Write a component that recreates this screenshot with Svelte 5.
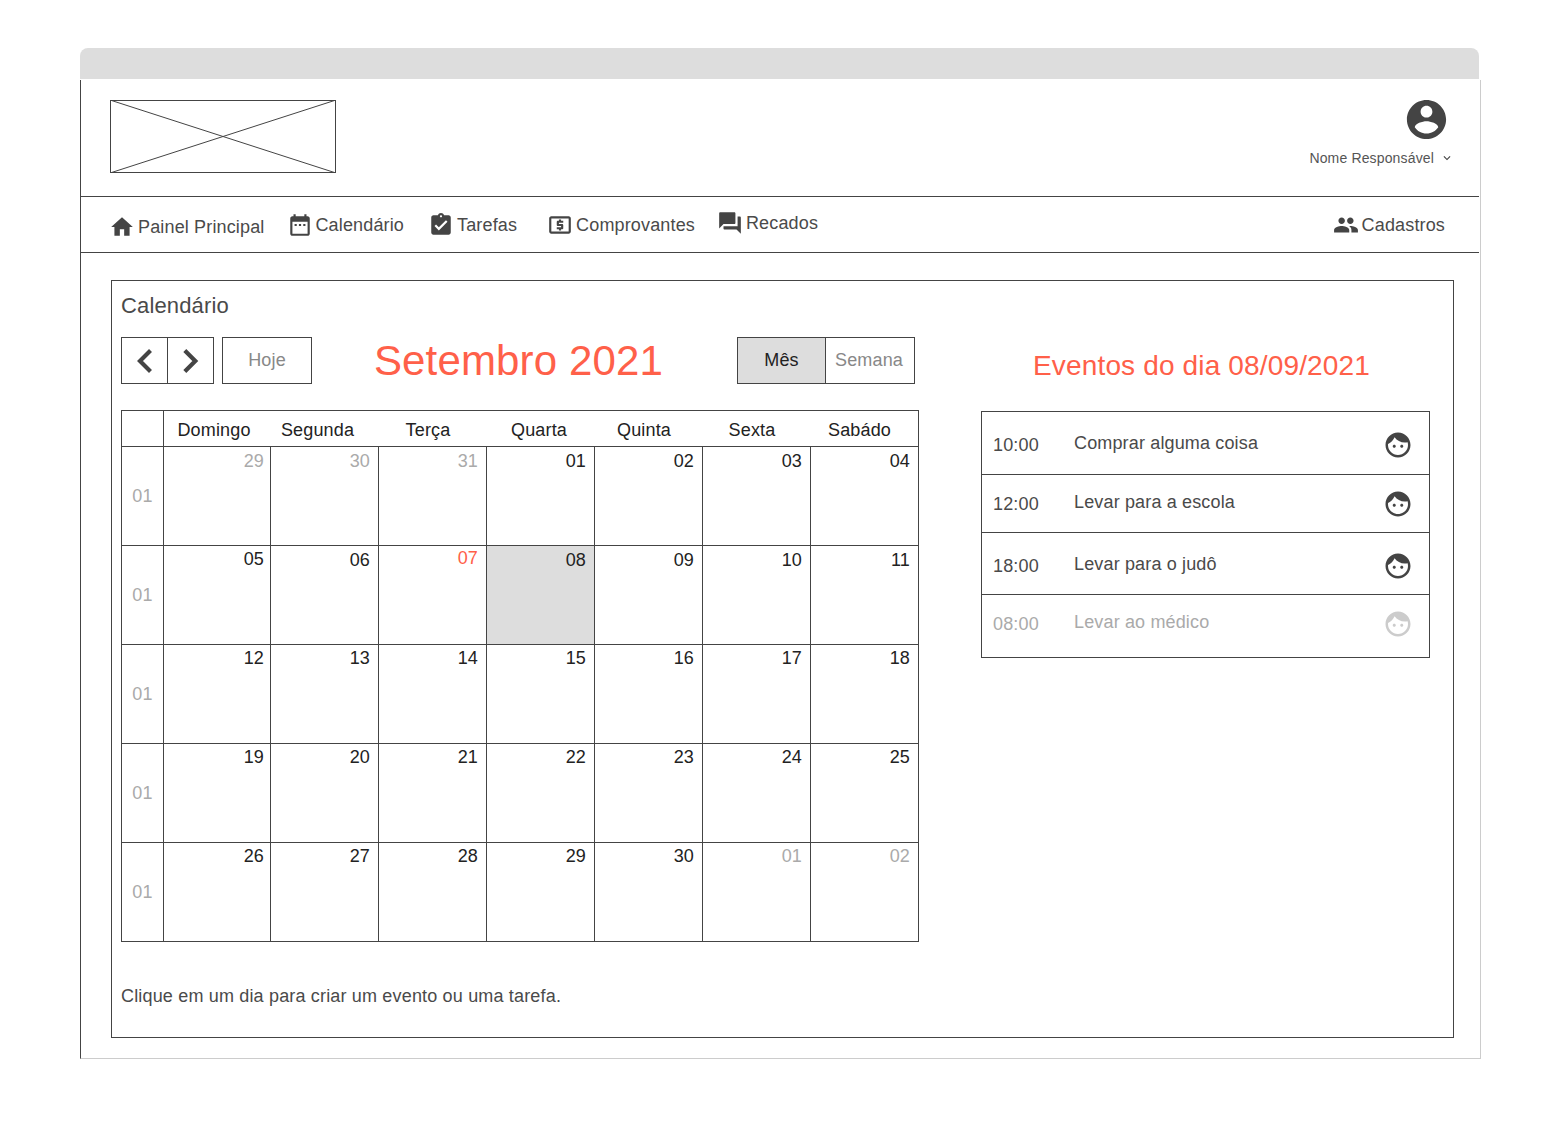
<script>
	const weekdays = ["Domingo", "Segunda", "Terça", "Quarta", "Quinta", "Sexta", "Sabádo"];
	const weeks = [
		["29", "30", "31", "01", "02", "03", "04"],
		["05", "06", "07", "08", "09", "10", "11"],
		["12", "13", "14", "15", "16", "17", "18"],
		["19", "20", "21", "22", "23", "24", "25"],
		["26", "27", "28", "29", "30", "01", "02"]
	];
	const events = [
		{ time: "10:00", title: "Comprar alguma coisa", height: 63, top: 18 },
		{ time: "12:00", title: "Levar para a escola", height: 58, top: 14 },
		{ time: "18:00", title: "Levar para o judô", height: 62, top: 18 },
		{ time: "08:00", title: "Levar ao médico", height: 62, top: 14, done: true }
	];

	function dayClass(w, d) {
		if ((w === 0 && d < 3) || (w === 4 && d > 4)) return "day muted";
		if (w === 1 && d === 0) return "day raised";
		if (w === 1 && d === 2) return "day red";
		if (w === 1 && d === 3) return "day selected";
		return "day";
	}
</script>

<div class="page">
	<div class="topbar"></div>
	<div class="frame">
		<header class="header">
			<div class="logo">
				<svg width="226" height="73" viewBox="0 0 226 73">
					<rect x="0.5" y="0.5" width="225" height="72" fill="none" stroke="#444" />
					<path d="M0 0L226 73M226 0L0 73" stroke="#444" fill="none" />
				</svg>
			</div>
			<div class="user">
				<svg class="avatar" width="47" height="47" viewBox="0 0 24 24"><path d="M12 2C6.48 2 2 6.48 2 12s4.48 10 10 10 10-4.48 10-10S17.52 2 12 2zm0 3c1.66 0 3 1.34 3 3s-1.34 3-3 3-3-1.34-3-3 1.34-3 3-3zm0 14.2c-2.5 0-4.71-1.28-6-3.22.03-1.99 4-3.08 6-3.08 1.99 0 5.97 1.09 6 3.08-1.29 1.94-3.5 3.22-6 3.22z" /></svg>
				<div class="user__name">
					<span>Nome Responsável</span>
					<svg width="14" height="14" viewBox="0 0 24 24"><path d="M7.41 8.59L12 13.17l4.59-4.58L18 10l-6 6-6-6 1.41-1.41z" /></svg>
				</div>
			</div>
		</header>

		<nav class="nav">
			<a class="nav__item nav__home">
				<svg width="26" height="26" viewBox="0 0 24 24"><path d="M10 20v-6h4v6h5v-8h3L12 3 2 12h3v8z" /></svg>
				Painel Principal
			</a>
			<a class="nav__item nav__cal">
				<svg width="26" height="26" viewBox="0 0 24 24"><path d="M9 11H7v2h2v-2zm4 0h-2v2h2v-2zm4 0h-2v2h2v-2zm2-7h-1V2h-2v2H8V2H6v2H5c-1.11 0-1.99.9-1.99 2L3 20c0 1.1.89 2 2 2h14c1.1 0 2-.9 2-2V6c0-1.1-.9-2-2-2zm0 16H5V9h14v11z" /></svg>
				Calendário
			</a>
			<a class="nav__item nav__tasks">
				<svg width="26" height="26" viewBox="0 0 24 24"><path d="M19 3h-4.18C14.4 1.84 13.3 1 12 1c-1.3 0-2.4.84-2.82 2H5c-1.1 0-2 .9-2 2v14c0 1.1.9 2 2 2h14c1.1 0 2-.9 2-2V5c0-1.1-.9-2-2-2zm-7 0c.55 0 1 .45 1 1s-.45 1-1 1-1-.45-1-1 .45-1 1-1zm-2 14l-4-4 1.41-1.41L10 14.17l6.59-6.59L18 9l-8 8z" /></svg>
				Tarefas
			</a>
			<a class="nav__item nav__receipts">
				<svg width="26" height="26" viewBox="0 0 24 24"><path d="M11 17h2v-1h1c.55 0 1-.45 1-1v-3c0-.55-.45-1-1-1h-3v-1h4V8h-2V7h-2v1h-1c-.55 0-1 .45-1 1v3c0 .55.45 1 1 1h3v1H9v2h2v1zm9-13H4c-1.11 0-1.99.89-1.99 2L2 18c0 1.11.89 2 2 2h16c1.11 0 2-.89 2-2V6c0-1.11-.89-2-2-2zm0 14H4V6h16v12z" /></svg>
				Comprovantes
			</a>
			<a class="nav__item nav__messages">
				<svg width="26" height="26" viewBox="0 0 24 24"><path d="M21 6h-2v9H6v2c0 .55.45 1 1 1h11l4 4V7c0-.55-.45-1-1-1zm-4 6V3c0-.55-.45-1-1-1H3c-.55 0-1 .45-1 1v14l4-4h10c.55 0 1-.45 1-1z" /></svg>
				Recados
			</a>
			<a class="nav__item nav__records">
				<svg width="26" height="26" viewBox="0 0 24 24"><path d="M16 11c1.66 0 2.99-1.34 2.99-3S17.66 5 16 5c-1.66 0-3 1.34-3 3s1.34 3 3 3zm-8 0c1.66 0 2.99-1.34 2.99-3S9.66 5 8 5C6.34 5 5 6.34 5 8s1.34 3 3 3zm0 2c-2.33 0-7 1.17-7 3.5V19h14v-2.5c0-2.33-4.67-3.5-7-3.5zm8 0c-.29 0-.62.02-.97.05 1.16.84 1.97 1.97 1.97 3.45V19h6v-2.5c0-2.33-4.67-3.5-7-3.5z" /></svg>
				Cadastros
			</a>
		</nav>

		<section class="panel">
			<h2 class="panel__title">Calendário</h2>
			<div class="columns">
				<div class="left">
					<div class="toolbar">
						<div class="group">
							<button class="btn btn--arrow" aria-label="Anterior">
								<svg width="18" height="26" viewBox="0 0 18 26"><path d="M14.500 2.500L4 13l10.500 10.500" fill="none" stroke="#444" stroke-width="4.200" /></svg>
							</button>
							<button class="btn btn--arrow" aria-label="Próximo">
								<svg width="18" height="26" viewBox="0 0 18 26"><path d="M2.800 2.500L13.300 13 2.800 23.500" fill="none" stroke="#444" stroke-width="4.200" /></svg>
							</button>
						</div>
						<button class="btn btn--today">Hoje</button>
						<div class="month">Setembro 2021</div>
						<div class="group">
							<button class="btn btn--view active">Mês</button>
							<button class="btn btn--view">Semana</button>
						</div>
					</div>

					<div class="calendar">
						<div class="cal__corner"></div>
						{#each weekdays as name}
							<div class="cal__head">{name}</div>
						{/each}
						{#each weeks as week, w}
							<div class="cal__week">01</div>
							{#each week as day, d}
								<div class={dayClass(w, d)} class:first-row={w === 0 || w === 1} class:first-col={d === 0}>{day}</div>
							{/each}
						{/each}
					</div>

					<p class="hint">Clique em um dia para criar um evento ou uma tarefa.</p>
				</div>

				<div class="right">
					<h3 class="events__title">Eventos do dia 08/09/2021</h3>
					<ul class="events">
						{#each events as ev}
							<li class="event" class:done={ev.done} style="height: {ev.height}px; padding-top: {ev.top}px">
								<span class="event__time">{ev.time}</span>
								<span class="event__title">{ev.title}</span>
								<svg width="30" height="30" viewBox="0 0 24 24"><path fill-rule="evenodd" d="M9 11.750c-.69 0-1.250.56-1.250 1.250s.56 1.250 1.250 1.250 1.250-.56 1.250-1.250-.56-1.250-1.250-1.250zm6 0c-.69 0-1.250.56-1.250 1.250s.56 1.250 1.250 1.250 1.250-.56 1.250-1.250-.56-1.250-1.250-1.250zM12 2C6.480 2 2 6.480 2 12s4.480 10 10 10 10-4.480 10-10S17.520 2 12 2zm0 18c-4.410 0-8-3.590-8-8 0-.29.02-.58.05-.86 2.360-1.050 4.230-2.980 5.210-5.370C11.070 8.330 14.050 10 17.420 10c.78 0 1.530-.09 2.250-.26.21.71.33 1.470.33 2.260 0 4.410-3.590 8-8 8z" /></svg>
							</li>
						{/each}
					</ul>
				</div>
			</div>
		</section>
	</div>
</div>

<style>
	:global(body) {
		margin: 0;
		background: #fff;
		font-family: "Liberation Sans", Arial, sans-serif;
		letter-spacing: 0.15px;
		color: #4a4a4a;
	}

	svg {
		display: block;
		fill: #444;
		flex: none;
	}

	.page {
		width: 1401px;
		padding: 48px 0 78px 80px;
	}

	.topbar {
		width: 1399px;
		height: 31px;
		margin-bottom: 1px;
		background: #ddd;
		border-radius: 8px 8px 0 0;
	}

	.frame {
		height: 979px;
		box-sizing: border-box;
		border-left: 1px solid #444;
		border-right: 1px solid #ccc;
		border-bottom: 1px solid #ccc;
	}

	.header {
		display: flex;
		justify-content: space-between;
		height: 116px;
		padding: 20px 26px 0 29px;
		box-sizing: border-box;
		margin-right: 1px;
	}

	.user {
		display: flex;
		flex-direction: column;
		align-items: flex-end;
	}

	.avatar {
		margin: -4px 3px 0 0;
	}

	.user__name {
		display: flex;
		align-items: center;
		gap: 6px;
		margin-top: 7px;
		font-size: 14px;
		line-height: 16px;
		color: #555;
	}

	.user__name svg {
		margin-right: -1px;
	}

	.nav {
		display: flex;
		align-items: flex-start;
		height: 57px;
		box-sizing: border-box;
		margin-right: 1px;
		border-top: 1px solid #444;
		border-bottom: 1px solid #444;
		padding-left: 28px;
	}

	.nav__item {
		display: flex;
		align-items: center;
		gap: 3px;
		font-size: 18px;
		line-height: 26px;
		white-space: nowrap;
	}

	.nav__home { margin-top: 17px; }
	.nav__cal { margin: 15px 0 0 23px; gap: 2px; }
	.nav__tasks { margin: 15px 0 0 24px; }
	.nav__receipts { margin: 15px 0 0 30px; }
	.nav__messages { margin: 13px 0 0 22px; }
	.nav__records { margin: 15px 34px 0 auto; }

	.panel {
		margin: 27px 26px 0 30px;
		height: 758px;
		box-sizing: border-box;
		border: 1px solid #444;
		padding: 12px 9px 0;
	}

	.panel__title {
		margin: 0;
		font-size: 22px;
		font-weight: 400;
		line-height: 25px;
	}

	.columns {
		display: flex;
		margin-top: 19px;
	}

	.left {
		width: 798px;
	}

	.toolbar {
		display: flex;
		align-items: center;
		width: 794px;
		height: 47px;
	}

	.group {
		display: flex;
		height: 47px;
		box-sizing: border-box;
		border: 1px solid #444;
	}

	.btn {
		display: flex;
		align-items: center;
		justify-content: center;
		padding: 0;
		font: inherit;
		font-size: 18px;
		letter-spacing: inherit;
		color: #888;
		background: #fff;
		border: 0;
	}

	.btn--arrow {
		width: 45px;
	}

	.btn--arrow + .btn--arrow {
		width: 46px;
		border-left: 1px solid #444;
	}

	.btn--today {
		width: 90px;
		height: 47px;
		margin-left: 8px;
		box-sizing: border-box;
		border: 1px solid #444;
	}

	.btn--view {
		width: 87px;
	}

	.btn--view + .btn--view {
		width: 89px;
		padding-right: 2px;
		border-left: 1px solid #444;
	}

	.btn--view.active {
		background: #ddd;
		color: #222;
	}

	.month {
		flex: 1;
		padding-right: 12px;
		text-align: center;
		font-size: 42px;
		color: #ff6049;
	}

	.calendar {
		display: grid;
		grid-template-columns: 42px 107px repeat(6, 108px);
		grid-template-rows: 36px repeat(5, 99px);
		width: 798px;
		box-sizing: border-box;
		margin-top: 26px;
		border-top: 1px solid #444;
		border-left: 1px solid #444;
		font-size: 18px;
	}

	.cal__corner,
	.cal__head,
	.cal__week,
	.day {
		border-bottom: 1px solid #444;
	}

	.cal__corner {
		border-right: 1px solid #444;
		margin-right: -1px;
		width: 41px;
	}

	.cal__head {
		padding-right: 10px;
		text-align: center;
		line-height: 38px;
		color: #222;
		height: 35px;
	}

	.cal__head:nth-child(2) { padding-right: 7px; }
	.cal__head:nth-child(3) { padding-right: 15px; }
	.cal__head:nth-child(5) { padding-right: 4px; }
	.cal__head:nth-child(8) { border-right: 1px solid #444; }

	.cal__week {
		display: flex;
		align-items: center;
		justify-content: center;
		height: 98px;
		color: #aaa;
		border-right: 1px solid #444;
		margin-right: -1px;
		width: 41px;
	}

	.day {
		padding: 3px 8px 0 0;
		box-sizing: border-box;
		height: 99px;
		text-align: right;
		line-height: 21px;
		color: #222;
		border-right: 1px solid #444;
	}

	.first-row { padding-top: 4px; }
	.first-col { padding-right: 6px; }

	.day.raised { padding-top: 3px; }
	.muted { color: #aaa; }
	.day.red { padding-top: 2px; color: #ff6049; }
	.selected { background: #ddd; }

	.hint {
		margin: 44px 0 0;
		font-size: 18px;
		line-height: 21px;
		letter-spacing: 0.17px;
	}

	.right {
		width: 472px;
	}

	.events__title {
		margin: 0 0 0 93px;
		height: 47px;
		padding-top: 9px;
		box-sizing: border-box;
		font-size: 28px;
		font-weight: 400;
		line-height: 40px;
		text-align: center;
		white-space: nowrap;
		color: #ff6049;
	}

	.events {
		width: 449px;
		box-sizing: border-box;
		margin: 27px 0 0 62px;
		padding: 0;
		list-style: none;
		border: 1px solid #444;
	}

	.event {
		display: flex;
		align-items: flex-start;
		box-sizing: border-box;
		padding: 0 16px 0 11px;
		font-size: 18px;
		line-height: 30px;
		border-bottom: 1px solid #444;
	}

	.event:last-child {
		border-bottom: 0;
	}

	.event__time {
		width: 81px;
	}

	.event__title {
		flex: 1;
		margin-top: -2px;
	}

	.done {
		color: #aaa;
	}

	.done svg {
		fill: #ccc;
	}
</style>
